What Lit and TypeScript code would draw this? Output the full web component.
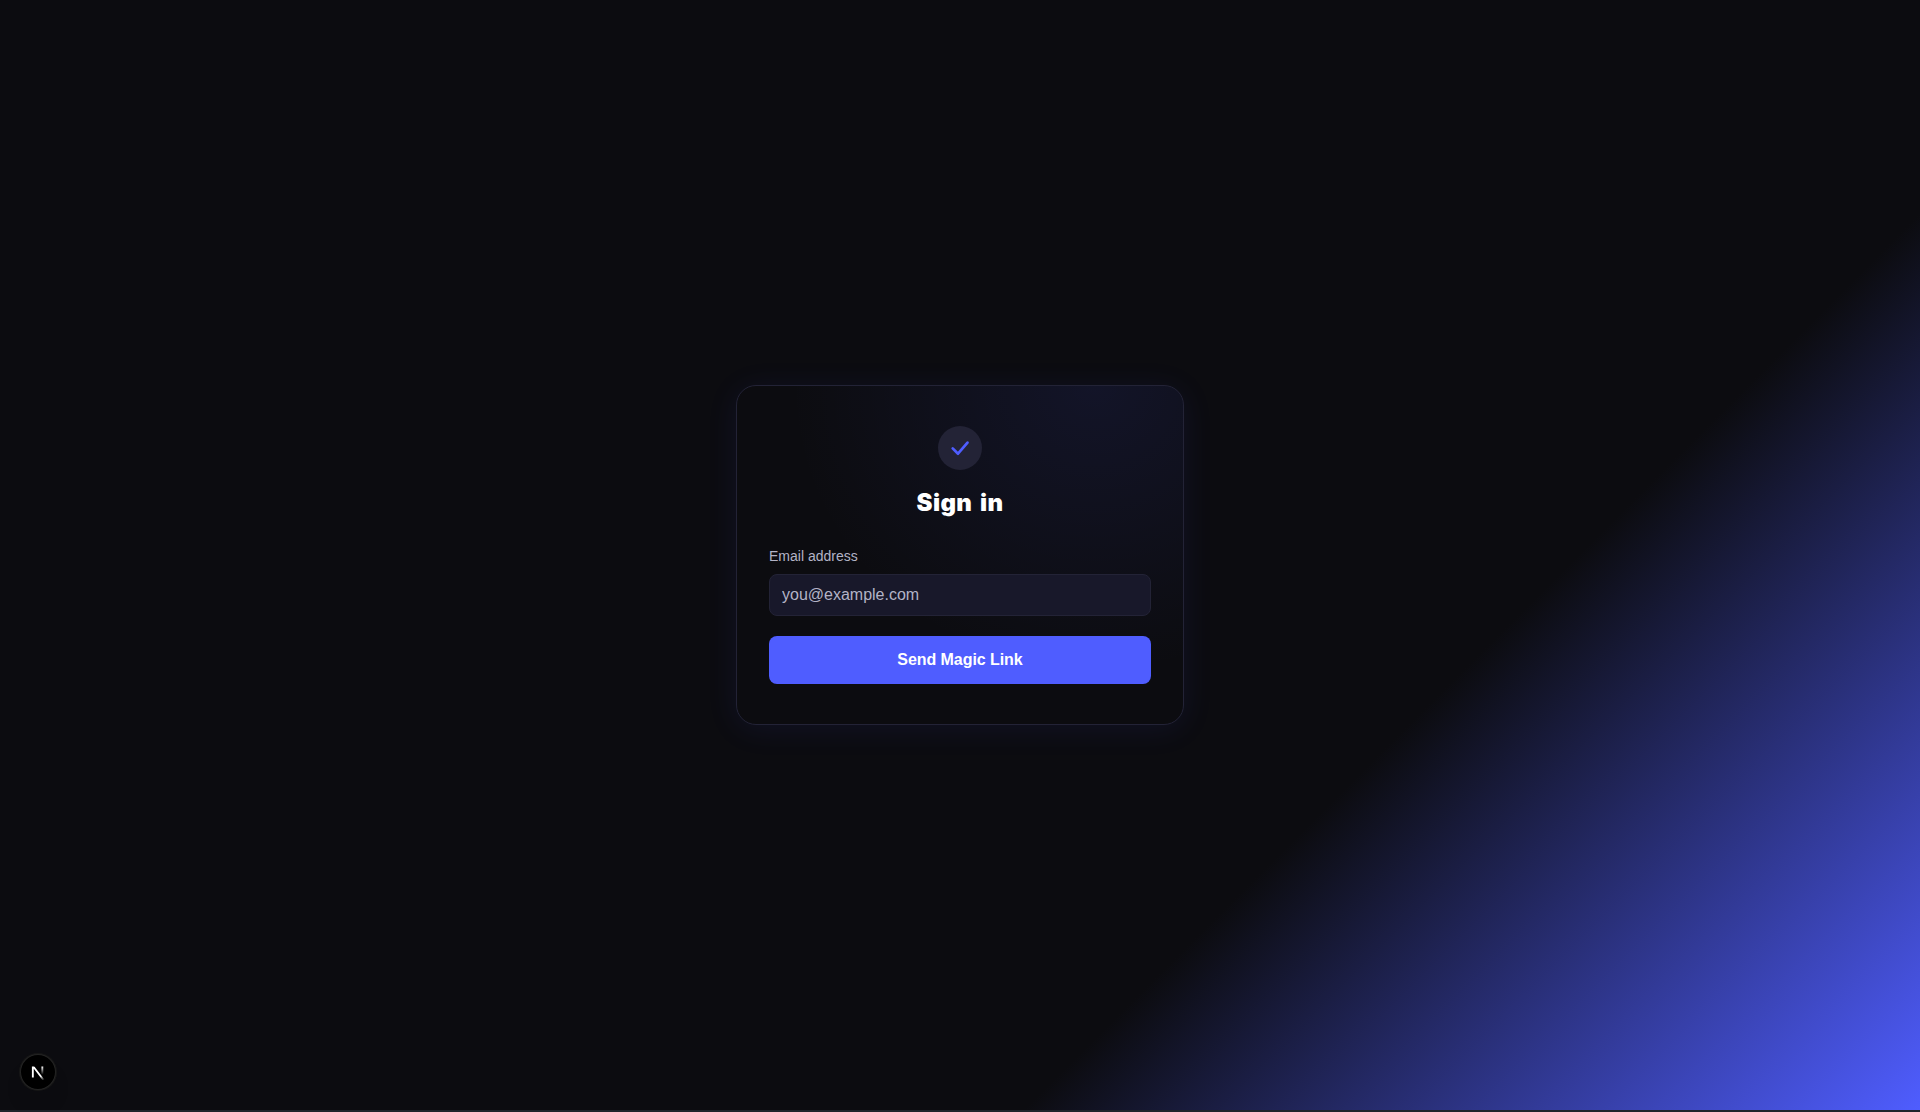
import { LitElement, html, css } from "lit";
import { customElement } from "lit/decorators.js";

@customElement("app-root")
export class AppRoot extends LitElement {
  static styles = css`
    :host {
      display: flex;
      flex-direction: column;
      height: 1112px;
      background: #1f232a;
      font-family: "Liberation Sans", Arial, sans-serif;
      color: #fff;
    }
    *, *::before, *::after { box-sizing: border-box; }
    .page {
      position: relative;
      height: 1110px;
      display: flex;
      align-items: center;
      justify-content: center;
      background: linear-gradient(135deg, #0c0c10 0%, #0c0c10 70.4%, #4f5dff 100%);
    }
    .card {
      width: 448px;
      padding: 40px 32px;
      display: flex;
      flex-direction: column;
      border: 1px solid #232336;
      border-radius: 20px;
      background: radial-gradient(ellipse at 80% 0%, rgba(79, 93, 255, 0.1) 0%, transparent 60%) border-box, #0c0c10;
      box-shadow: 0 4px 32px 0 rgba(79, 93, 255, 0.09);
    }
    .mark {
      align-self: center;
      width: 44px;
      height: 44px;
      margin-bottom: 16px;
      border-radius: 50%;
      display: flex;
      align-items: center;
      justify-content: center;
      background: #232336;
    }
    .mark svg { display: block; }
    h1 {
      margin: 0 0 28px;
      padding-top: 1px;
      height: 32px;
      font: 900 24px/32px Inter, "Liberation Sans", sans-serif;
      letter-spacing: 0.4px;
      word-spacing: 2.5px;
      text-align: center;
    }
    form { display: flex; flex-direction: column; margin: 0; }
    label {
      margin-bottom: 8px;
      font-size: 14px;
      line-height: 20px;
      color: #b3b3c6;
    }
    input {
      height: 42px;
      margin: 0 0 20px;
      padding: 8px 12px;
      border: 1px solid #232336;
      border-radius: 8px;
      outline: none;
      background: #18182a;
      color: #fff;
      font: 16px/24px "Liberation Sans", Arial, sans-serif;
    }
    input::placeholder { color: #b3b3c6; opacity: 1; }
    button {
      height: 48px;
      padding: 0;
      border: 0;
      border-radius: 8px;
      background: #4f5dff;
      color: #fff;
      font: 700 16px/24px "Liberation Sans", Arial, sans-serif;
      letter-spacing: -0.06px;
    }
    .dev-badge {
      position: absolute;
      left: 20px;
      bottom: 20px;
      width: 36px;
      height: 36px;
      border-radius: 50%;
      display: flex;
      align-items: center;
      justify-content: center;
      background: #000;
      box-shadow: 0 0 0 1px #171717, inset 0 0 0 1px rgba(255, 255, 255, 0.14), 0 16px 32px -8px rgba(0, 0, 0, 0.1);
    }
    .dev-badge svg { display: block; }
  `;

  render() {
    return html`
      <main class="page">
        <section class="card">
          <div class="mark">
            <svg width="24" height="24" viewBox="0 0 24 24" fill="none">
              <path d="M4.7 12.4 L10 17.7 L19.5 6.6" stroke="#4f5dff" stroke-width="2.7" stroke-linecap="round" stroke-linejoin="round" />
            </svg>
          </div>
          <h1>Sign in</h1>
          <form @submit=${(e: Event) => e.preventDefault()}>
            <label for="email">Email address</label>
            <input id="email" type="email" placeholder="you@example.com" />
            <button type="submit">Send Magic Link</button>
          </form>
        </section>
        <div class="dev-badge">
          <svg width="16" height="16" viewBox="0 0 16 16" fill="none">
            <defs>
              <linearGradient id="diag" x1="9.96" y1="11.12" x2="15.48" y2="17.97" gradientUnits="userSpaceOnUse">
                <stop stop-color="#fff" />
                <stop offset="0.604" stop-color="#fff" stop-opacity="0" />
                <stop offset="1" stop-color="#fff" stop-opacity="0" />
              </linearGradient>
              <linearGradient id="stem" x1="11.82" y1="1.4" x2="11.79" y2="9.63" gradientUnits="userSpaceOnUse">
                <stop stop-color="#fff" />
                <stop offset="1" stop-color="#fff" stop-opacity="0" />
              </linearGradient>
              <clipPath id="trim"><rect x="0" y="1.5" width="16" height="16" /></clipPath>
            </defs>
            <g transform="translate(0.5 1)">
              <path d="M13.3 15.2 L2.34 1 V12.6" stroke="url(#diag)" stroke-width="1.86" clip-path="url(#trim)" />
              <path d="M11.825 1.5 V13.1" stroke="url(#stem)" stroke-width="1.86" />
            </g>
          </svg>
        </div>
      </main>
    `;
  }
}
